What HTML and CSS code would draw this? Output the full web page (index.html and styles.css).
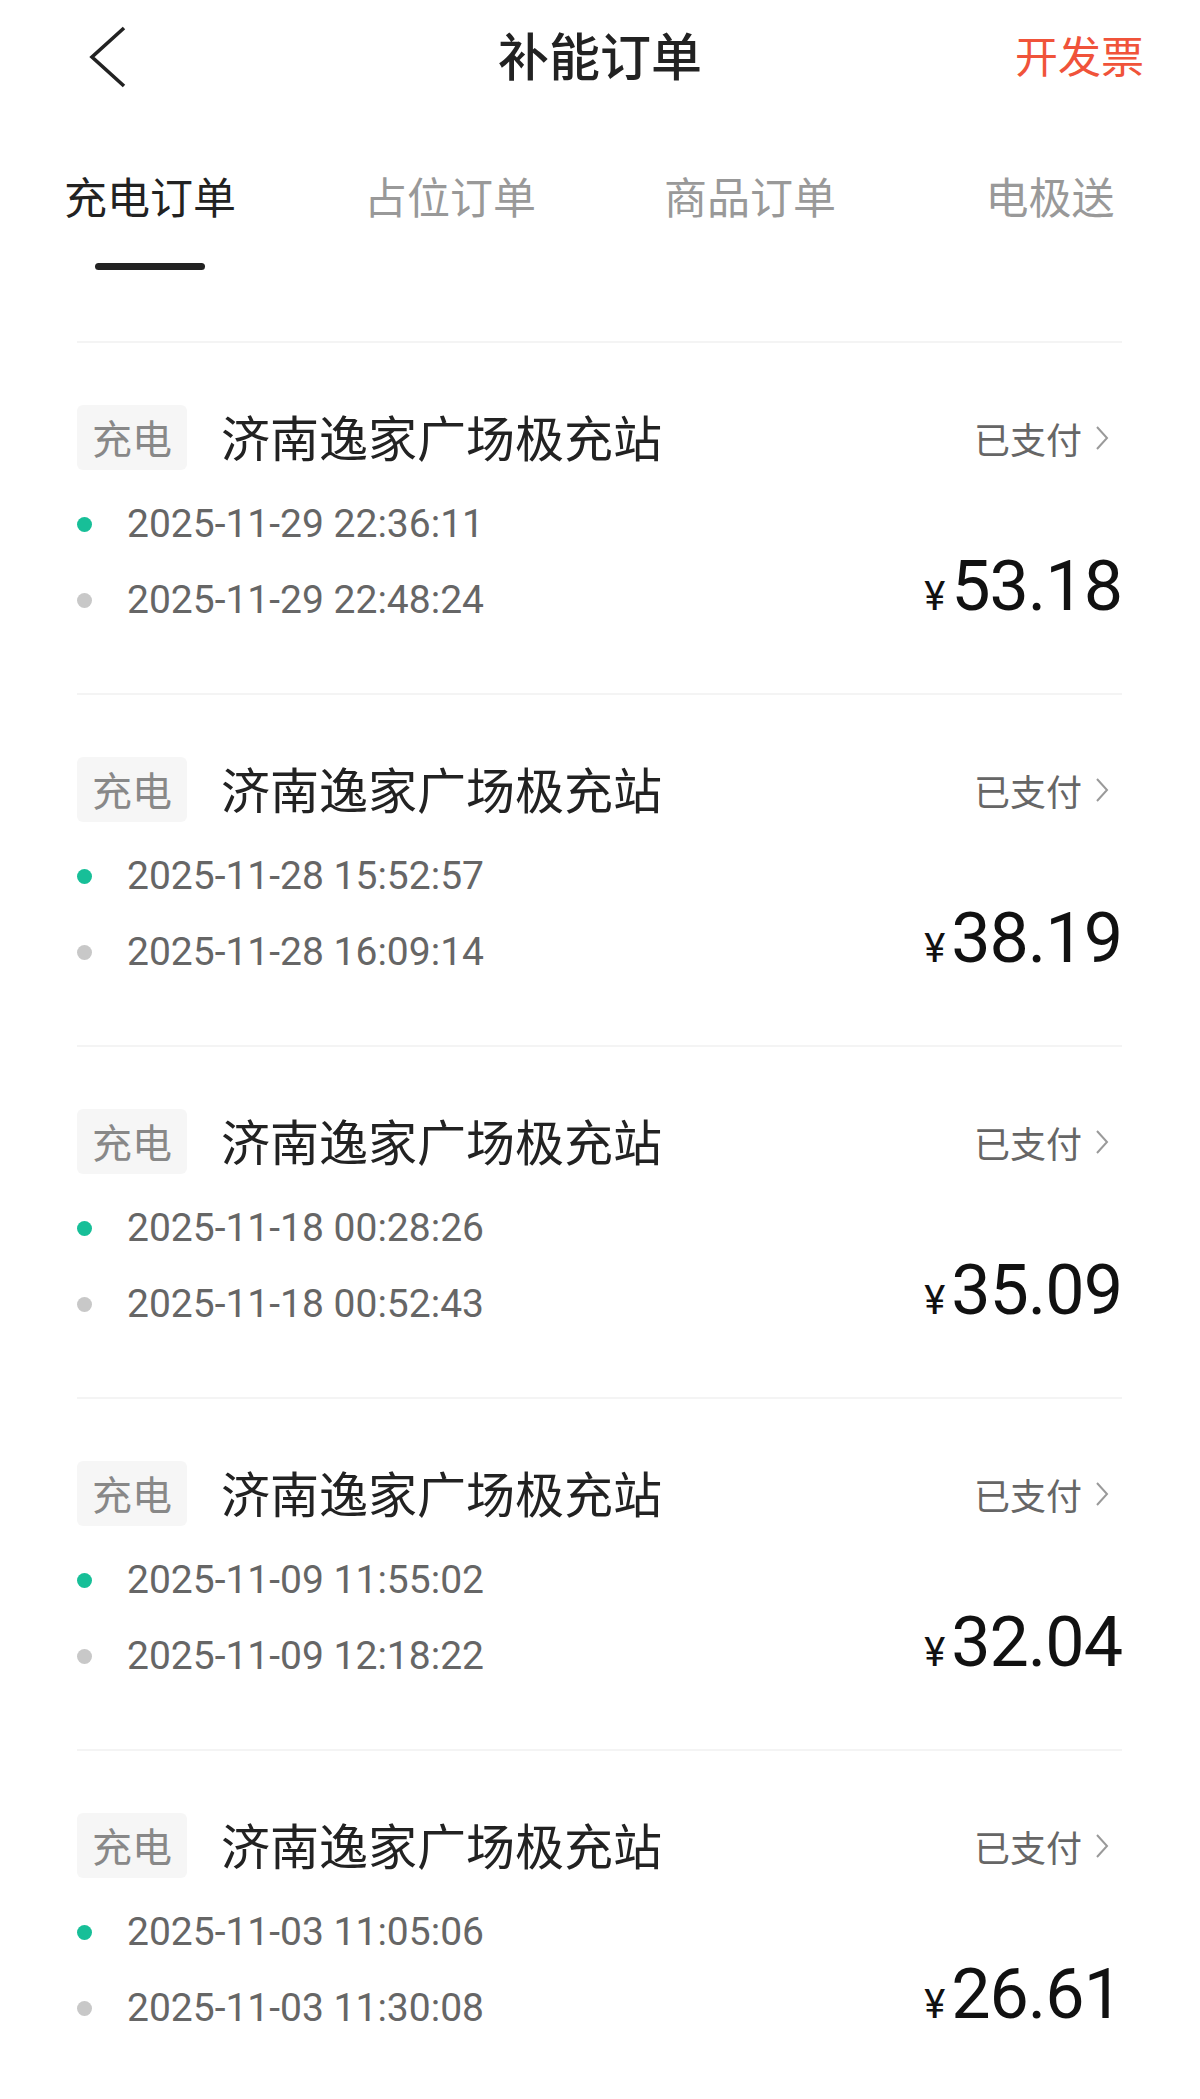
FILE: index.html
```html
<!DOCTYPE html>
<html lang="zh-CN">
<head>
    <meta charset="UTF-8">
    <meta name="viewport" content="width=device-width, initial-scale=1.0">
    <title>补能订单</title>
    <link rel="stylesheet" href="styles.css">
</head>
<body>
    <header class="nav">
        <a class="nav-back" href="#">
            <svg width="38" height="62" viewBox="0 0 38 62"><path d="M35 2 L3 31 L35 60" fill="none" stroke="#222" stroke-width="3.6" stroke-linejoin="miter"/></svg>
        </a>
        <h1 class="nav-title">补能订单</h1>
        <a class="nav-action" href="#">开发票</a>
    </header>

    <div class="tabs">
        <div class="tab tab-active">充电订单</div>
        <div class="tab">占位订单</div>
        <div class="tab">商品订单</div>
        <div class="tab">电极送</div>
    </div>

    <div class="order-list">
        <div class="order">
            <div class="order-head">
                <span class="order-tag">充电</span>
                <span class="order-station">济南逸家广场极充站</span>
                <span class="order-status">已支付<svg width="16" height="26" viewBox="0 0 16 26"><path d="M3 2 L13 13 L3 24" fill="none" stroke="#9a9a9a" stroke-width="2"/></svg></span>
            </div>
            <div class="order-body">
                <div class="order-times">
                    <div class="time-row"><i class="dot dot-start"></i>2025-11-29 22:36:11</div>
                    <div class="time-row"><i class="dot dot-end"></i>2025-11-29 22:48:24</div>
                </div>
                <div class="order-price"><span class="currency">¥</span>53.18</div>
            </div>
        </div>

        <div class="order">
            <div class="order-head">
                <span class="order-tag">充电</span>
                <span class="order-station">济南逸家广场极充站</span>
                <span class="order-status">已支付<svg width="16" height="26" viewBox="0 0 16 26"><path d="M3 2 L13 13 L3 24" fill="none" stroke="#9a9a9a" stroke-width="2"/></svg></span>
            </div>
            <div class="order-body">
                <div class="order-times">
                    <div class="time-row"><i class="dot dot-start"></i>2025-11-28 15:52:57</div>
                    <div class="time-row"><i class="dot dot-end"></i>2025-11-28 16:09:14</div>
                </div>
                <div class="order-price"><span class="currency">¥</span>38.19</div>
            </div>
        </div>

        <div class="order">
            <div class="order-head">
                <span class="order-tag">充电</span>
                <span class="order-station">济南逸家广场极充站</span>
                <span class="order-status">已支付<svg width="16" height="26" viewBox="0 0 16 26"><path d="M3 2 L13 13 L3 24" fill="none" stroke="#9a9a9a" stroke-width="2"/></svg></span>
            </div>
            <div class="order-body">
                <div class="order-times">
                    <div class="time-row"><i class="dot dot-start"></i>2025-11-18 00:28:26</div>
                    <div class="time-row"><i class="dot dot-end"></i>2025-11-18 00:52:43</div>
                </div>
                <div class="order-price"><span class="currency">¥</span>35.09</div>
            </div>
        </div>

        <div class="order">
            <div class="order-head">
                <span class="order-tag">充电</span>
                <span class="order-station">济南逸家广场极充站</span>
                <span class="order-status">已支付<svg width="16" height="26" viewBox="0 0 16 26"><path d="M3 2 L13 13 L3 24" fill="none" stroke="#9a9a9a" stroke-width="2"/></svg></span>
            </div>
            <div class="order-body">
                <div class="order-times">
                    <div class="time-row"><i class="dot dot-start"></i>2025-11-09 11:55:02</div>
                    <div class="time-row"><i class="dot dot-end"></i>2025-11-09 12:18:22</div>
                </div>
                <div class="order-price"><span class="currency">¥</span>32.04</div>
            </div>
        </div>

        <div class="order">
            <div class="order-head">
                <span class="order-tag">充电</span>
                <span class="order-station">济南逸家广场极充站</span>
                <span class="order-status">已支付<svg width="16" height="26" viewBox="0 0 16 26"><path d="M3 2 L13 13 L3 24" fill="none" stroke="#9a9a9a" stroke-width="2"/></svg></span>
            </div>
            <div class="order-body">
                <div class="order-times">
                    <div class="time-row"><i class="dot dot-start"></i>2025-11-03 11:05:06</div>
                    <div class="time-row"><i class="dot dot-end"></i>2025-11-03 11:30:08</div>
                </div>
                <div class="order-price"><span class="currency">¥</span>26.61</div>
            </div>
        </div>
    </div>
</body>
</html>
```

FILE: styles.css
```css
body {
    margin: 0;
    padding: 0;
    background-color: #fff;
    font-family: "Noto Sans CJK SC", "Noto Sans", sans-serif;
    color: #222;
    overflow: hidden;
}

a {
    text-decoration: none;
}

/* top bar */
.nav {
    display: grid;
    grid-template-columns: 1fr auto 1fr;
    align-items: center;
    height: 108px;
}

.nav-back {
    display: flex;
    padding-left: 89px;
    padding-top: 5px;
}

.nav-title {
    margin: 0;
    font-size: 51px;
    font-weight: 500;
    line-height: 60px;
    color: #222;
}

.nav-action {
    justify-self: end;
    padding-right: 56px;
    font-size: 43px;
    line-height: 56px;
    color: #f0533a;
}

/* tabs */
.tabs {
    display: grid;
    grid-template-columns: repeat(4, 1fr);
    padding-top: 57px;
}

.tab {
    text-align: center;
    font-size: 43px;
    line-height: 60px;
    color: #999;
}

.tab-active {
    color: #222;
}

.tab-active::after {
    content: "";
    display: block;
    width: 110px;
    height: 7px;
    margin: 38px auto 0;
    border-radius: 4px;
    background-color: #222;
}

/* order list */
.order-list {
    margin-top: 71px;
    padding: 0 78px 0 77px;
}

.order {
    border-top: 2px solid #f4f4f4;
    padding: 62px 0 55px;
}

.order-head {
    display: flex;
    align-items: center;
    height: 65px;
}

.order-tag {
    padding: 0 15px;
    height: 65px;
    line-height: 65px;
    font-size: 40px;
    color: #888;
    background-color: #f6f6f6;
    border-radius: 6px;
}

.order-station {
    flex: 1;
    margin-left: 34px;
    padding-bottom: 4px;
    font-size: 49px;
    line-height: 60px;
    color: #222;
}

.order-status {
    display: flex;
    align-items: center;
    gap: 12px;
    margin-right: 12px;
    font-size: 36px;
    line-height: 50px;
    color: #666;
}

.order-body {
    display: flex;
    justify-content: space-between;
    align-items: flex-end;
    margin-top: 16px;
}

.time-row {
    display: flex;
    align-items: center;
    height: 76px;
    font-family: Roboto, "Noto Sans", sans-serif;
    font-size: 39px;
    color: #666;
}

.dot {
    width: 15px;
    height: 15px;
    margin-right: 35px;
    border-radius: 50%;
}

.dot-start {
    background-color: #17bf98;
}

.dot-end {
    background-color: #c8c8c8;
}

.order-price {
    margin-bottom: 6px;
    font-family: Roboto, "Noto Sans", sans-serif;
    font-size: 70px;
    line-height: 70px;
    letter-spacing: -1px;
    color: #111;
}

.currency {
    margin-right: 6px;
    font-size: 40px;
    letter-spacing: 0;
}
```
